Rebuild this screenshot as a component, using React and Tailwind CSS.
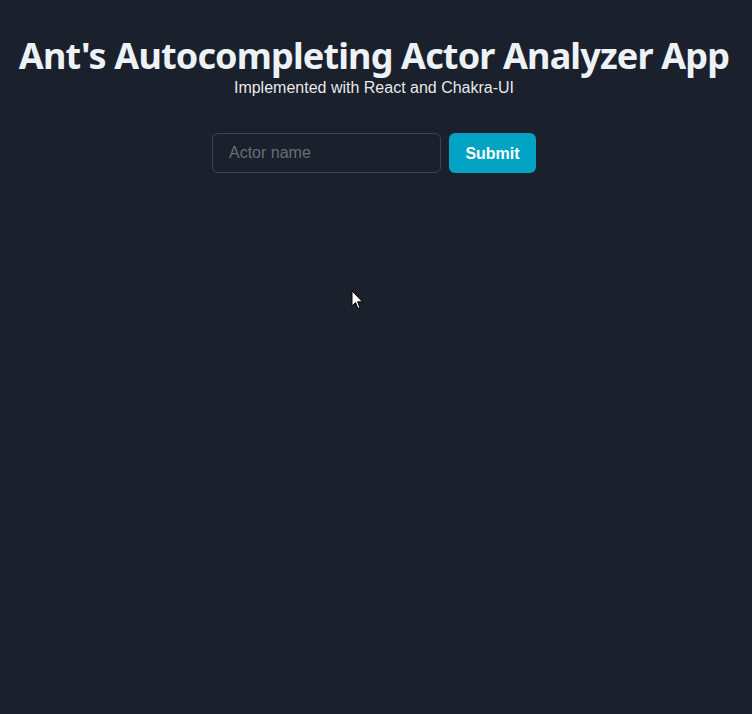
export default function App() {
  return (
    <div className="min-h-screen bg-[#1a202c] text-[#ffffffeb] font-['Liberation_Sans',Arial,sans-serif] relative">
      <div className="flex flex-col items-center pt-[36px] pr-[4px]">
        <h1 className="font-['Noto_Sans',sans-serif] font-bold text-[36px] leading-[40px] tracking-[-0.85px] text-[#edf2f7]">
          Ant's Autocompleting Actor Analyzer App
        </h1>
        <p className="text-[16px] leading-[20px] mt-[2px]">Implemented with React and Chakra-UI</p>
        <form className="flex gap-2 mt-[35px]" onSubmit={(e) => e.preventDefault()}>
          <input
            placeholder="Actor name"
            className="w-[229px] h-10 px-4 rounded-md border border-[#ffffff29] bg-transparent text-[16px] placeholder:text-[#ffffff5c] outline-none"
          />
          <button className="w-[87px] h-10 pt-[2px] rounded-md bg-[#00a3c4] text-white font-bold text-[16px]">
            Submit
          </button>
        </form>
      </div>
      <svg className="absolute left-[351px] top-[290px]" width="13" height="20" viewBox="0 0 13 20">
        <path d="M1 1 L1 16 L4.5 12.5 L7 18.5 L9 17.6 L6.6 11.8 L11.5 11.8 Z" fill="#fff" stroke="#000" strokeWidth="1" />
      </svg>
    </div>
  );
}
